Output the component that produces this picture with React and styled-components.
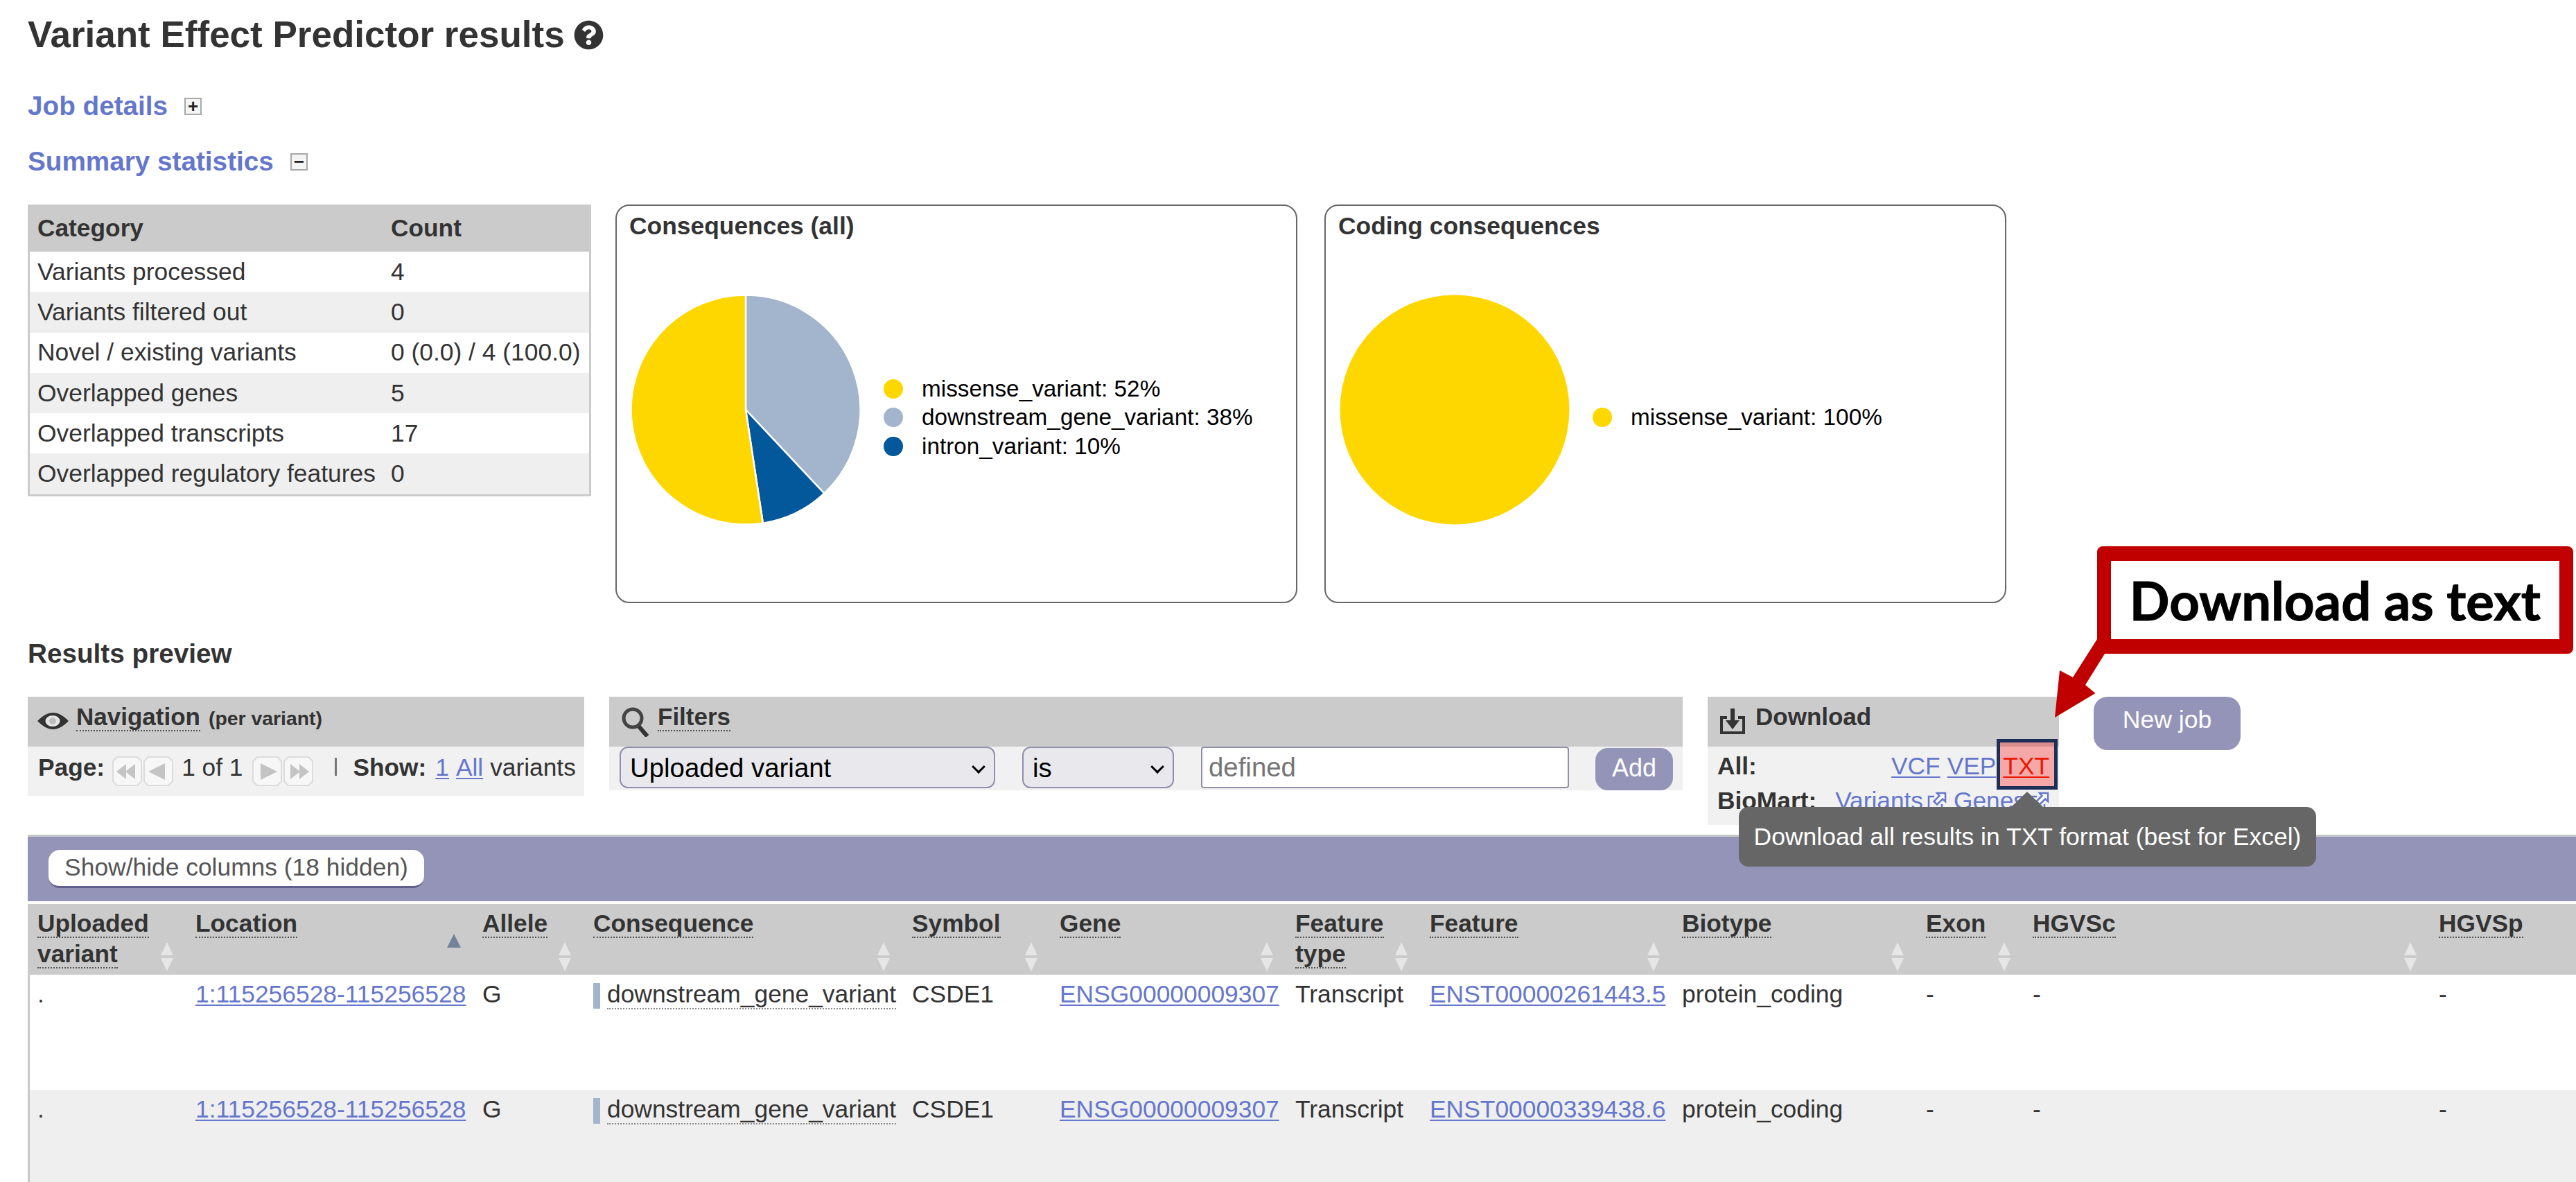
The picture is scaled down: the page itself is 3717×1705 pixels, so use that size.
import * as React from "react"
import styled, { createGlobalStyle } from "styled-components"
import { FaQuestionCircle } from "react-icons/fa"

const GlobalStyle = createGlobalStyle`
  html, body {
    margin: 0;
    padding: 0;
    background: #fff;
  }
  body {
    font-family: "Liberation Sans", Arial, sans-serif;
    color: #333;
  }
`

const LINK = "#6577cc"
const HEAD = "#cbcbcb"
const BODY = "#f1f1f1"
const PURPLE = "#9494b8"

const stats = [
  ["Variants processed", "4"],
  ["Variants filtered out", "0"],
  ["Novel / existing variants", "0 (0.0) / 4 (100.0)"],
  ["Overlapped genes", "5"],
  ["Overlapped transcripts", "17"],
  ["Overlapped regulatory features", "0"],
]

const columns = [
  { label: "Uploaded variant", width: 228 },
  { label: "Location", width: 414, sorted: true },
  { label: "Allele", width: 160 },
  { label: "Consequence", width: 460 },
  { label: "Symbol", width: 213 },
  { label: "Gene", width: 340 },
  { label: "Feature type", width: 194 },
  { label: "Feature", width: 364 },
  { label: "Biotype", width: 352 },
  { label: "Exon", width: 154 },
  { label: "HGVSc", width: 586 },
  { label: "HGVSp", width: 212, plain: true },
]

const rows = [
  { transcript: "ENST00000261443.5" },
  { transcript: "ENST00000339438.6" },
]

// slices of a pie, start at 12 o'clock and go clockwise
const polar = (cx, cy, r, pct) => {
  const a = (pct / 100) * 2 * Math.PI
  return [cx + r * Math.sin(a), cy - r * Math.cos(a)]
}

const Pie = ({ slices }) => {
  let from = 0
  return (
    <PieSvg viewBox="0 0 332 332">
      {slices.length === 1 ? (
        <circle cx="166" cy="166" r="165.5" fill={slices[0].color} />
      ) : (
        slices.map((s) => {
          const [x1, y1] = polar(166, 166, 165.5, from)
          const [x2, y2] = polar(166, 166, 165.5, from + s.pct)
          const large = s.pct > 50 ? 1 : 0
          from += s.pct
          return (
            <path
              key={s.color}
              d={`M166 166L${x1} ${y1}A165.5 165.5 0 ${large} 1 ${x2} ${y2}Z`}
              fill={s.color}
              stroke="#fff"
              strokeWidth="2.5"
            />
          )
        })
      )}
    </PieSvg>
  )
}

const ChartPanel = ({ title, slices, legend }) => (
  <Chart>
    <ChartTitle>{title}</ChartTitle>
    <ChartBody>
      <Pie slices={slices} />
      <Legend>
        {legend.map((l) => (
          <LegendRow key={l.text}>
            <Dot $color={l.color} />
            {l.text}
          </LegendRow>
        ))}
      </Legend>
    </ChartBody>
  </Chart>
)

const EyeIcon = () => (
  <svg width="45" height="24" viewBox="0 0 45 24">
    <path d="M0 12C8 4 15 0 22.5 0S37 4 45 12c-8 8-15 12-22.5 12S8 20 0 12Z" fill="#333" />
    <ellipse cx="22" cy="12" rx="10.5" ry="8" fill="#e4e4e4" />
    <ellipse cx="22" cy="12" rx="5" ry="4.5" fill="#bdbdbd" />
  </svg>
)

const SearchIcon = () => (
  <svg width="42" height="44" viewBox="0 0 42 44">
    <circle cx="17" cy="17" r="13" fill="none" stroke="#444" strokeWidth="5" />
    <path d="M26 29l12 14" stroke="#333" strokeWidth="6" />
  </svg>
)

const DownloadIcon = () => (
  <svg width="40" height="40" viewBox="0 0 40 40">
    <path d="M2 12h10v4H6v18h28V16h-6v-4h10v26H2Z" fill="#333" />
    <path d="M17 1h6v17h7L20 31 10 18h7Z" fill="#333" />
  </svg>
)

const PagerButton = ({ double, flip }) => (
  <PagerSvg viewBox="0 0 43 43">
    <path
      d="M7 1h29l6 6v29l-6 6H7l-6-6V7Z"
      fill="#f7f7f7"
      stroke="#dcdcdc"
      strokeWidth="2"
    />
    <g fill="#c4c4c4" transform={flip ? "translate(43 0) scale(-1 1)" : undefined}>
      {double ? (
        <path d="M6 22l14-11v22ZM19 22l14-11v22Z" />
      ) : (
        <path d="M7 22l24-12v24Z" />
      )}
    </g>
  </PagerSvg>
)

const ExternalIcon = () => (
  <ExternalSvg viewBox="0 0 28 28" fill="none" stroke={LINK} strokeWidth="2.5">
    <path d="M10 7H2v19h19v-8" />
    <path d="M14 2h12v12l-4-3.5-8 8-4.500-4.500 8-8Z" fill="#fff" />
  </ExternalSvg>
)

const SortIcon = () => (
  <SortSvg viewBox="0 0 22 42">
    <path d="M11 0l9 19H2Z" fill="#e6e6e6" />
    <path d="M2 23h18l-9 19Z" fill="#e6e6e6" />
  </SortSvg>
)

const App = () => (
  <Page>
    <GlobalStyle />
    <Title>
      Variant Effect Predictor results
      <HelpIcon>
        <FaQuestionCircle size={43} />
      </HelpIcon>
    </Title>

    <Section>
      Job details
      <ToggleBox>+</ToggleBox>
    </Section>
    <Section $tight>
      Summary statistics
      <ToggleBox>−</ToggleBox>
    </Section>

    <StatsRow>
      <StatsTable>
        <thead>
          <tr>
            <StatsHead>Category</StatsHead>
            <StatsHead>Count</StatsHead>
          </tr>
        </thead>
        <tbody>
          {stats.map(([name, value]) => (
            <tr key={name}>
              <StatsCell>{name}</StatsCell>
              <StatsCell>{value}</StatsCell>
            </tr>
          ))}
        </tbody>
      </StatsTable>
      <ChartPanel
        title="Consequences (all)"
        slices={[
          { pct: 38, color: "#a2b5cd" },
          { pct: 9.6, color: "#02589b" },
          { pct: 52.4, color: "#ffd700" },
        ]}
        legend={[
          { color: "#ffd700", text: "missense_variant: 52%" },
          { color: "#a2b5cd", text: "downstream_gene_variant: 38%" },
          { color: "#02589b", text: "intron_variant: 10%" },
        ]}
      />
      <ChartPanel
        title="Coding consequences"
        slices={[{ pct: 100, color: "#ffd700" }]}
        legend={[{ color: "#ffd700", text: "missense_variant: 100%" }]}
      />
    </StatsRow>

    <Subhead>Results preview</Subhead>

    <Toolbar>
      <NavPanel>
        <PanelHead>
          <IconSlot $top={23}>
            <EyeIcon />
          </IconSlot>
          <HeadText>Navigation</HeadText>
          <HeadNote>(per variant)</HeadNote>
        </PanelHead>
        <NavBody>
          <Strong>Page:</Strong>
          <Pager>
            <PagerButton double />
            <PagerButton />
          </Pager>
          <PageCount>1 of 1</PageCount>
          <Pager $next>
            <PagerButton flip />
            <PagerButton double flip />
          </Pager>
          <NavDivider />
          <Strong>Show:</Strong>
          <ShowLinks>
            <TextLink>1</TextLink>
            <TextLink>All</TextLink>
            <span>variants</span>
          </ShowLinks>
        </NavBody>
      </NavPanel>

      <FilterPanel>
        <FilterHead>
          <IconSlot $top={14}>
            <SearchIcon />
          </IconSlot>
          <HeadText>Filters</HeadText>
        </FilterHead>
        <FilterBody>
          <SelectWrap $width={542}>
            <Select defaultValue="Uploaded variant">
              <option>Uploaded variant</option>
            </Select>
            <Chevron />
          </SelectWrap>
          <SelectWrap $width={219}>
            <Select defaultValue="is">
              <option>is</option>
            </Select>
            <Chevron />
          </SelectWrap>
          <FilterInput placeholder="defined" />
          <AddButton>Add</AddButton>
        </FilterBody>
      </FilterPanel>

      <DownloadPanel>
        <DownloadHead>
          <IconSlot $top={16}>
            <DownloadIcon />
          </IconSlot>
          <HeadPlain>Download</HeadPlain>
        </DownloadHead>
        <DownloadBody>
          <DownloadRow>
            <Strong>All:</Strong>
            <DownloadLinks>
              <TextLink>VCF</TextLink>
              <TextLink>VEP</TextLink>
              <TxtLink>TXT</TxtLink>
            </DownloadLinks>
          </DownloadRow>
          <DownloadRow>
            <Strong>BioMart:</Strong>
            <DownloadLinks>
              <TextLink>Variants</TextLink>
              <ExternalIcon />
              <TextLink>Genes</TextLink>
              <ExternalIcon />
            </DownloadLinks>
          </DownloadRow>
        </DownloadBody>
        <Tooltip>Download all results in TXT format (best for Excel)</Tooltip>
      </DownloadPanel>

      <NewJob>New job</NewJob>
    </Toolbar>

    <TableBar>
      <ColumnsButton>Show/hide columns (18 hidden)</ColumnsButton>
    </TableBar>
    <ResultsTable>
      <colgroup>
        {columns.map((c) => (
          <Col key={c.label} $width={c.width} />
        ))}
      </colgroup>
      <thead>
        <tr>
          {columns.map((c) => (
            <Th key={c.label}>
              <Dotted>{c.label}</Dotted>
              {c.sorted ? <SortedMark /> : !c.plain && <SortIcon />}
            </Th>
          ))}
        </tr>
      </thead>
      <tbody>
        {rows.map((r) => (
          <Row key={r.transcript}>
            <Td>.</Td>
            <Td>
              <TextLink>1:115256528-115256528</TextLink>
            </Td>
            <Td>G</Td>
            <Td>
              <ConsequenceBar />
              <Dotted $light>downstream_gene_variant</Dotted>
            </Td>
            <Td>CSDE1</Td>
            <Td>
              <TextLink>ENSG00000009307</TextLink>
            </Td>
            <Td>Transcript</Td>
            <Td>
              <TextLink>{r.transcript}</TextLink>
            </Td>
            <Td>protein_coding</Td>
            <Td>-</Td>
            <Td>-</Td>
            <Td>-</Td>
          </Row>
        ))}
      </tbody>
    </ResultsTable>

    <Arrow viewBox="0 0 90 125">
      <path d="M66 7L31 62 12 52 5 120 63.5 85 49 73 77 28Z" fill="#c00000" />
    </Arrow>
    <Callout>Download as text</Callout>
  </Page>
)

const Page = styled.div`
  position: relative;
  width: 3717px;
  height: 1705px;
  overflow: hidden;
  padding-left: 40px;
  box-sizing: border-box;
`

const Title = styled.h1`
  display: flex;
  align-items: center;
  margin: 0;
  padding-top: 20px;
  height: 60px;
  box-sizing: content-box;
  font-size: 53px;
  line-height: 60px;
  font-weight: 700;
  color: #333;
`

const HelpIcon = styled.span`
  display: inline-flex;
  margin-left: 13px;
  color: #333;
`

const Section = styled.h2`
  display: flex;
  align-items: center;
  margin: ${(p) => (p.$tight ? "34px" : "50px")} 0 0;
  height: 46px;
  font-size: 38.7px;
  line-height: 46px;
  font-weight: 700;
  color: ${LINK};
`

const ToggleBox = styled.span`
  display: flex;
  align-items: center;
  justify-content: center;
  width: 25px;
  height: 25px;
  margin-left: 24px;
  box-sizing: border-box;
  border: 2px solid #a8a8a8;
  font-size: 26px;
  line-height: 1;
  font-weight: 700;
  color: #222;
  background: #f4f4f4;
`

const StatsRow = styled.div`
  display: flex;
  align-items: flex-start;
  margin-top: 39px;
`

const StatsTable = styled.table`
  width: 813px;
  table-layout: fixed;
  border-collapse: separate;
  border-spacing: 0;
  border: solid ${HEAD};
  border-width: 0 3px 3px;
  flex: none;
  margin-right: 35px;
  tbody tr:nth-child(even) td {
    background: #efefef;
  }
`

const StatsHead = styled.th`
  height: 68px;
  padding: 0 0 0 11px;
  background: ${HEAD};
  font-size: 35.3px;
  text-align: left;
  color: #333;
  &:first-child {
    width: 510px;
    box-sizing: border-box;
  }
`

const StatsCell = styled.td`
  height: 58.3px;
  padding: 0 0 0 11px;
  font-size: 35.4px;
  white-space: nowrap;
  color: #333;
`

const Chart = styled.div`
  width: 984px;
  height: 575px;
  box-sizing: border-box;
  flex: none;
  margin-right: 39px;
  border: 2px solid #666;
  border-radius: 20px;
  padding: 8px 18px;
`

const ChartTitle = styled.div`
  font-size: 35.4px;
  line-height: 42px;
  font-weight: 700;
  color: #333;
`

const ChartBody = styled.div`
  display: flex;
  align-items: center;
  margin-top: 78px;
  padding-left: 2px;
`

const PieSvg = styled.svg`
  width: 332px;
  height: 332px;
  flex: none;
`

const Legend = styled.div`
  margin-left: 33px;
  padding-top: 22px;
`

const LegendRow = styled.div`
  display: flex;
  align-items: center;
  height: 41.5px;
  font-size: 33.3px;
  color: #000;
  white-space: nowrap;
`

const Dot = styled.span`
  width: 28px;
  height: 28px;
  margin-right: 27px;
  border-radius: 50%;
  background: ${(p) => p.$color};
`

const Subhead = styled.h3`
  margin: 50px 0 0;
  height: 46px;
  font-size: 38.7px;
  line-height: 46px;
  font-weight: 700;
  color: #333;
`

const Toolbar = styled.div`
  display: flex;
  align-items: flex-start;
  height: 199px;
  margin-top: 39px;
`

const PanelHead = styled.div`
  display: flex;
  align-items: flex-start;
  height: 72px;
  padding: 10px 0 0 14px;
  box-sizing: border-box;
  background: ${HEAD};
`

const FilterHead = styled(PanelHead)`
  padding-left: 17px;
`

const DownloadHead = styled(PanelHead)`
  padding-left: 16px;
`

const IconSlot = styled.span`
  display: flex;
  margin-top: ${(p) => p.$top - 10}px;
  margin-right: 11px;
`

const Dotted = styled.span`
  border-bottom: 2px dotted ${(p) => (p.$light ? "#888" : "#555")};
`

const HeadText = styled(Dotted)`
  font-size: 35px;
  line-height: 38px;
  font-weight: 700;
  color: #333;
`

const HeadPlain = styled.span`
  margin-left: 2px;
  font-size: 35px;
  line-height: 38px;
  font-weight: 700;
  color: #333;
`

const HeadNote = styled.span`
  margin-left: 12px;
  font-size: 28.4px;
  line-height: 42px;
  font-weight: 700;
  color: #333;
`

const NavPanel = styled.div`
  width: 803px;
  flex: none;
  margin-right: 36px;
`

const NavBody = styled.div`
  display: flex;
  align-items: flex-start;
  height: 71px;
  padding: 8px 0 0 15px;
  box-sizing: border-box;
  font-size: 35.3px;
  line-height: 44px;
  background: ${BODY};
`

const Strong = styled.strong`
  font-weight: 700;
  color: #333;
`

const Pager = styled.div`
  display: flex;
  gap: 2px;
  margin: 6px 0 0 ${(p) => (p.$next ? "14px" : "11px")};
`

const PagerSvg = styled.svg`
  width: 43px;
  height: 43px;
`

const PageCount = styled.span`
  margin-left: 12px;
`

const NavDivider = styled.span`
  width: 3px;
  height: 26px;
  margin: 8px 23px 0 31px;
  background: #777;
`

const ShowLinks = styled.span`
  display: inline-flex;
  gap: 10px;
  margin-left: 13px;
`

const TextLink = styled.a`
  color: ${LINK};
  text-decoration: underline;
  text-underline-offset: 3px;
  text-decoration-thickness: 2px;
`

const FilterPanel = styled.div`
  width: 1549px;
  flex: none;
  margin-right: 36px;
`

const FilterBody = styled.div`
  display: flex;
  align-items: flex-start;
  gap: 39px;
  height: 63px;
  padding-left: 15px;
  box-sizing: border-box;
  background: ${BODY};
`

const SelectWrap = styled.div`
  position: relative;
  width: ${(p) => p.$width}px;
  height: 60px;
  flex: none;
`

const Select = styled.select`
  appearance: none;
  width: 100%;
  height: 100%;
  padding: 0 0 0 13px;
  box-sizing: border-box;
  border: 2px solid #8f8fab;
  border-radius: 12px;
  background: #e9e9ed;
  font-family: inherit;
  font-size: 38.4px;
  color: #000;
`

const Chevron = styled.span`
  position: absolute;
  right: 17px;
  top: 22px;
  width: 11px;
  height: 11px;
  border: solid #000;
  border-width: 0 3px 3px 0;
  transform: rotate(45deg);
`

const FilterInput = styled.input`
  width: 531px;
  height: 60px;
  flex: none;
  padding: 0 0 0 9px;
  box-sizing: border-box;
  border: 2px solid #8f8fab;
  border-radius: 4px;
  background: #fff;
  font-family: inherit;
  font-size: 38.4px;
  &::placeholder {
    color: #757575;
    opacity: 1;
  }
`

const AddButton = styled.div`
  width: 112px;
  height: 61px;
  margin: 2px 0 0 -1px;
  border-radius: 18px;
  background: ${PURPLE};
  color: #fff;
  font-size: 36px;
  line-height: 58px;
  text-align: center;
`

const DownloadPanel = styled.div`
  position: relative;
  width: 507px;
  flex: none;
  margin-right: 50px;
`

const DownloadBody = styled.div`
  height: 113px;
  padding: 3px 14px 0;
  box-sizing: border-box;
  background: ${BODY};
  font-size: 35.3px;
  line-height: 50px;
`

const DownloadRow = styled.div`
  display: flex;
  justify-content: space-between;
  align-items: center;
`

const DownloadLinks = styled.div`
  display: flex;
  align-items: center;
  gap: 10px;
`

const ExternalSvg = styled.svg`
  width: 28px;
  height: 28px;
  margin: 2px 0 0 -4px;
`

const TxtLink = styled.a`
  position: relative;
  color: #e02400;
  text-decoration: underline;
  text-underline-offset: 3px;
  text-decoration-thickness: 2px;
  &::after {
    content: "";
    position: absolute;
    left: -9px;
    right: -12px;
    top: -14px;
    bottom: -9px;
    border: 5px solid #1c2f57;
    background: rgba(255, 0, 0, 0.3);
  }
`

const Tooltip = styled.div`
  position: absolute;
  left: 45px;
  top: 159px;
  z-index: 3;
  display: flex;
  align-items: center;
  justify-content: center;
  width: 833px;
  height: 86px;
  border-radius: 14px;
  background: #666;
  color: #fff;
  font-size: 35.5px;
  white-space: nowrap;
  &::before {
    content: "";
    position: absolute;
    left: 393px;
    top: -22px;
    border: solid transparent;
    border-width: 0 23px 22px;
    border-bottom-color: #666;
  }
`

const NewJob = styled.div`
  width: 212px;
  height: 77px;
  border-radius: 20px;
  background: ${PURPLE};
  color: #fff;
  font-size: 35.6px;
  line-height: 66px;
  text-align: center;
`

const TableBar = styled.div`
  display: flex;
  align-items: flex-start;
  height: 96px;
  padding: 19px 0 0 30px;
  margin-right: -40px;
  box-sizing: border-box;
  border-top: 3px solid #c8c8c8;
  background: ${PURPLE};
`

const ColumnsButton = styled.div`
  width: 542px;
  height: 55px;
  box-sizing: border-box;
  border-bottom: 3px solid #5f5f8f;
  border-radius: 16px;
  background: #fff;
  color: #555;
  font-size: 35.4px;
  line-height: 50px;
  text-align: center;
  white-space: nowrap;
`

const ResultsTable = styled.table`
  width: 3677px;
  margin-top: 4px;
  table-layout: fixed;
  border-collapse: separate;
  border-spacing: 0;
`

const Col = styled.col`
  width: ${(p) => p.$width}px;
`

const Th = styled.th`
  position: relative;
  height: 102px;
  padding: 6px 14px 0;
  box-sizing: border-box;
  background: ${HEAD};
  font-size: 35.3px;
  line-height: 44px;
  font-weight: 700;
  text-align: left;
  vertical-align: top;
  color: #333;
`

const SortSvg = styled.svg`
  position: absolute;
  right: 16px;
  top: 55px;
  width: 22px;
  height: 42px;
`

const SortedMark = styled.span`
  position: absolute;
  right: 17px;
  top: 43px;
  border: solid transparent;
  border-width: 0 10px 20px;
  border-bottom-color: #74829c;
`

const Row = styled.tr`
  &:nth-child(even) td {
    background: #efefef;
  }
  &:first-child td {
    height: 166px;
  }
`

const Td = styled.td`
  padding: 6px 14px 0;
  height: 134px;
  box-sizing: border-box;
  font-size: 35.4px;
  line-height: 44px;
  vertical-align: top;
  white-space: nowrap;
  color: #333;
  &:first-child {
    border-left: 3px solid #c8c8c8;
    padding-left: 11px;
  }
`

const ConsequenceBar = styled.span`
  display: inline-block;
  width: 10px;
  height: 37px;
  margin-right: 10px;
  vertical-align: -9px;
  background: #a2b5cd;
`

const Callout = styled.div`
  position: absolute;
  left: 3026px;
  top: 788px;
  z-index: 4;
  display: flex;
  align-items: center;
  justify-content: center;
  width: 687px;
  height: 155px;
  box-sizing: border-box;
  border: solid #c00000;
  border-width: 21px 20px;
  border-radius: 8px;
  background: #fff;
  font-family: Lato, "Liberation Sans", sans-serif;
  font-size: 76px;
  font-weight: 700;
  -webkit-text-stroke: 1px #000;
  color: #000;
  white-space: nowrap;
`

const Arrow = styled.svg`
  position: absolute;
  left: 2960px;
  top: 915px;
  z-index: 2;
  width: 90px;
  height: 125px;
`

export default App
